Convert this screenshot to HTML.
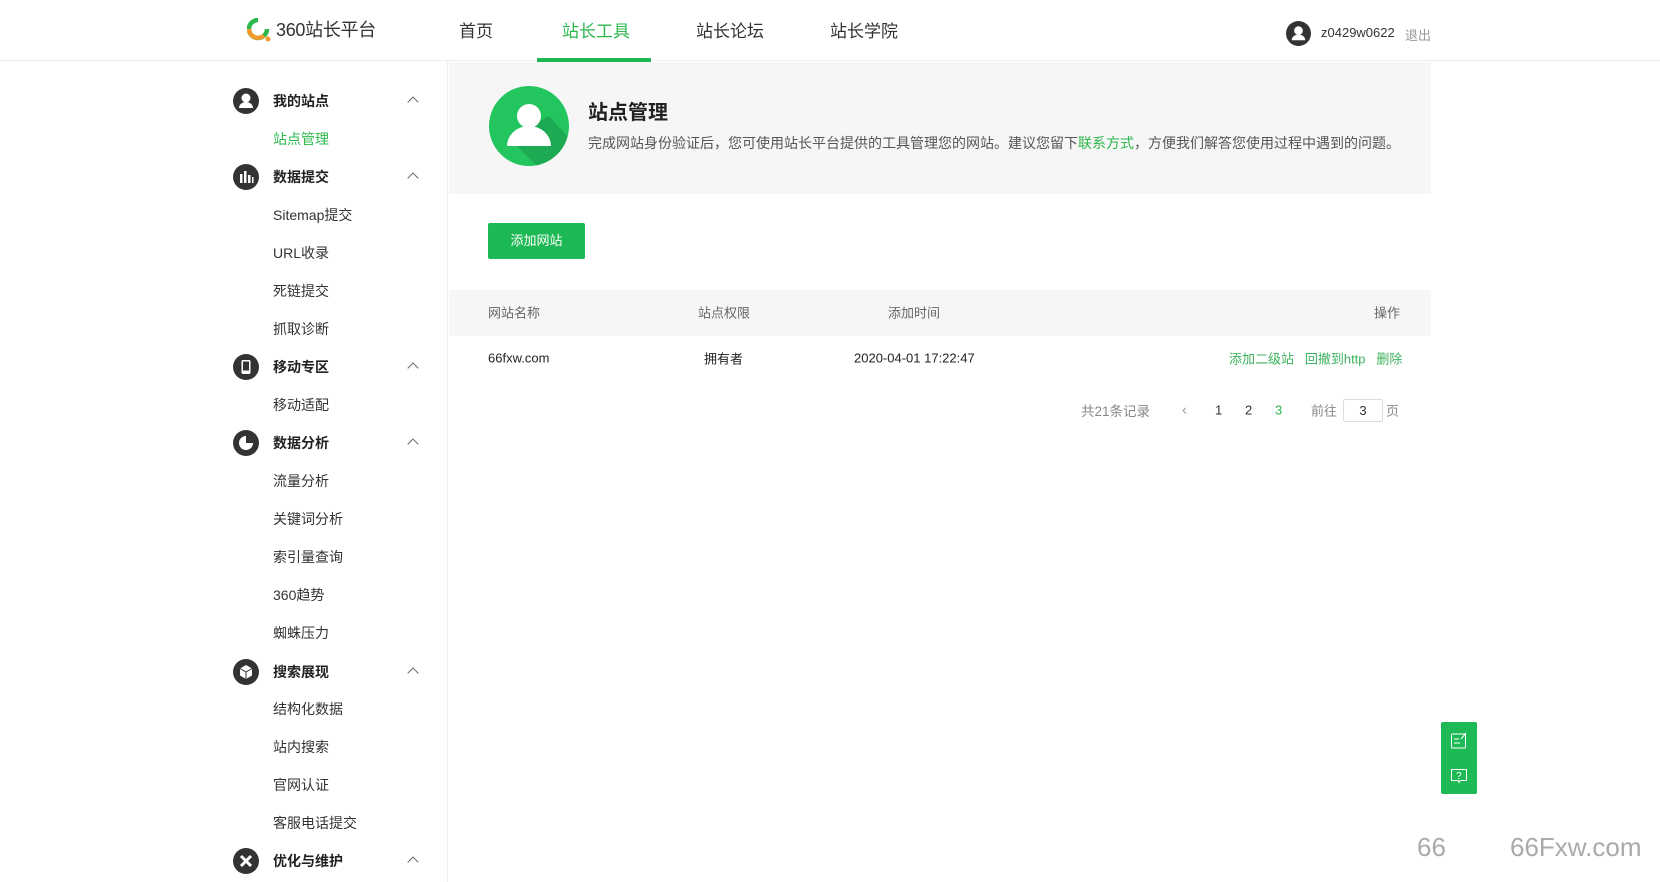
<!DOCTYPE html>
<html><head><meta charset="utf-8"><style>
*{margin:0;padding:0;box-sizing:border-box}
body{width:1660px;height:882px;overflow:hidden;background:#fff;font-family:"Liberation Sans","Noto Sans CJK SC",sans-serif;color:#333;position:relative}
.a{position:absolute;white-space:nowrap}
.hdr{position:absolute;left:0;top:0;width:1660px;height:61px;border-bottom:1px solid #eee;background:#fff}
.nav{font-size:17px;color:#333;top:17px}
.side{position:absolute;left:0;top:62px;width:448px;height:820px;border-right:1px solid #eee}
.it{position:absolute;left:273px;font-size:14px;color:#333;transform:translateY(-50%)}
.grp{font-weight:bold;color:#222}
.ic{position:absolute;left:233px;width:26px;height:26px;border-radius:50%;background:#333;transform:translateY(-50%)}
.chev{position:absolute;left:409px;width:8px;height:8px;border-left:1.3px solid #666;border-top:1.3px solid #666;transform:rotate(45deg)}
.c{transform:translateY(-50%);font-size:13px}
</style></head><body>
<div class="hdr">
  <svg class="a" style="left:247px;top:18px" width="26" height="26" viewBox="0 0 26 26"><path d="M11 2a9 9 0 1 0 9 9" stroke="#2db84d" stroke-width="4.5" fill="none"/><path d="M2 11a9 9 0 0 0 15 6.5" stroke="#f39a2b" stroke-width="4.5" fill="none"/><circle cx="21" cy="21" r="2.5" fill="#f39a2b"/></svg>
  <div class="a" style="left:276px;top:16px;font-size:18px;color:#333;letter-spacing:-0.3px">360站长平台</div>
  <div class="a nav" style="left:459px">首页</div>
  <div class="a nav" style="left:562px;color:#2db84d">站长工具</div>
  <div class="a" style="left:537px;top:58px;width:114px;height:4px;background:#1db954"></div>
  <div class="a nav" style="left:696px">站长论坛</div>
  <div class="a nav" style="left:830px">站长学院</div>
  <svg class="a" style="left:1286px;top:21px" width="25" height="25" viewBox="0 0 26 26"><circle cx="13" cy="13" r="13" fill="#333"/><circle cx="13" cy="10" r="4.5" fill="#fff"/><path d="M6 20a7 6 0 0 1 14 0z" fill="#fff"/></svg>
  <div class="a" style="left:1321px;top:25px;font-size:13px;color:#333">z0429w0622</div>
  <div class="a" style="left:1405px;top:25px;font-size:13px;color:#999">退出</div>
</div>
<div class="side"></div>
<div class="ic" style="top:101px"></div><svg class="a" style="left:233px;top:88px" width="26" height="26"><circle cx="13" cy="10" r="4.5" fill="#fff"/><path d="M6 20a7 6 0 0 1 14 0z" fill="#fff"/></svg>
<div class="it grp" style="top:101px">我的站点</div><div class="chev" style="top:98px"></div>
<div class="it" style="top:139px;color:#2db84d">站点管理</div>
<div class="ic" style="top:177px"></div><svg class="a" style="left:233px;top:164px" width="26" height="26"><rect x="7" y="10" width="2.5" height="9" fill="#fff"/><rect x="11" y="7" width="2.5" height="12" fill="#fff"/><rect x="15" y="11" width="2.5" height="8" fill="#fff"/><rect x="19" y="13" width="1.5" height="6" fill="#fff"/></svg>
<div class="it grp" style="top:177px">数据提交</div><div class="chev" style="top:174px"></div>
<div class="it" style="top:215px">Sitemap提交</div>
<div class="it" style="top:253px">URL收录</div>
<div class="it" style="top:291px">死链提交</div>
<div class="it" style="top:329px">抓取诊断</div>
<div class="ic" style="top:367px"></div><svg class="a" style="left:233px;top:354px" width="26" height="26"><rect x="8.5" y="6" width="9" height="14" rx="1.5" fill="#fff"/><rect x="10" y="7.5" width="6" height="9" fill="#333"/></svg>
<div class="it grp" style="top:367px">移动专区</div><div class="chev" style="top:364px"></div>
<div class="it" style="top:405px">移动适配</div>
<div class="ic" style="top:443px"></div><svg class="a" style="left:233px;top:430px" width="26" height="26"><circle cx="13" cy="13" r="7" fill="#fff"/><path d="M13 13V5a8 8 0 0 1 8 8z" fill="#333"/></svg>
<div class="it grp" style="top:443px">数据分析</div><div class="chev" style="top:440px"></div>
<div class="it" style="top:481px">流量分析</div>
<div class="it" style="top:519px">关键词分析</div>
<div class="it" style="top:557px">索引量查询</div>
<div class="it" style="top:595px">360趋势</div>
<div class="it" style="top:633px">蜘蛛压力</div>
<div class="ic" style="top:672px"></div><svg class="a" style="left:233px;top:659px" width="26" height="26"><path d="M13 6l6 3.5v7L13 20l-6-3.5v-7z" fill="#fff"/><path d="M7 9.5l6 3.5 6-3.5M13 13v7" stroke="#333" stroke-width="1" fill="none"/></svg>
<div class="it grp" style="top:672px">搜索展现</div><div class="chev" style="top:669px"></div>
<div class="it" style="top:709px">结构化数据</div>
<div class="it" style="top:747px">站内搜索</div>
<div class="it" style="top:785px">官网认证</div>
<div class="it" style="top:823px">客服电话提交</div>
<div class="ic" style="top:861px"></div><svg class="a" style="left:233px;top:848px" width="26" height="26"><path d="M8 8l10 10M18 8L8 18" stroke="#fff" stroke-width="3"/></svg>
<div class="it grp" style="top:861px">优化与维护</div><div class="chev" style="top:858px"></div>
<div class="a" style="left:449px;top:62px;width:982px;height:132px;background:#f6f6f6"></div>
<svg class="a" style="left:489px;top:86px" width="80" height="80" viewBox="0 0 80 80"><defs><clipPath id="cp"><circle cx="40" cy="40" r="40"/></clipPath></defs><circle cx="40" cy="40" r="40" fill="#22c55e"/><path d="M20 52L48 80H80V52L60 30z" fill="#1eaa52" clip-path="url(#cp)"/><circle cx="40" cy="30" r="12" fill="#fff"/><path d="M18 60a22 20 0 0 1 44 0z" fill="#fff"/></svg>
<div class="a" style="left:588px;top:96px;font-size:20px;font-weight:bold;color:#222">站点管理</div>
<div class="a" style="left:588px;top:133px;font-size:14px;color:#555">完成网站身份验证后，您可使用站长平台提供的工具管理您的网站。建议您留下<span style="color:#2db84d">联系方式</span>，方便我们解答您使用过程中遇到的问题。</div>
<div class="a" style="left:488px;top:223px;width:97px;height:36px;background:#1db954;border-radius:2px;color:#fff;font-size:13px;line-height:36px;text-align:center">添加网站</div>
<div class="a" style="left:449px;top:290px;width:982px;height:46px;background:#f6f6f6"></div>
<div class="a c" style="left:488px;top:312px;color:#666">网站名称</div>
<div class="a c" style="left:698px;top:312px;color:#666">站点权限</div>
<div class="a c" style="left:888px;top:312px;color:#666">添加时间</div>
<div class="a c" style="left:1374px;top:312px;color:#666">操作</div>
<div class="a c" style="left:488px;top:358px;color:#222">66fxw.com</div>
<div class="a c" style="left:704px;top:358px;color:#222">拥有者</div>
<div class="a c" style="left:854px;top:358px;color:#222">2020-04-01 17:22:47</div>
<div class="a c" style="left:1229px;top:358px;color:#3cb15c">添加二级站&nbsp;&nbsp;&nbsp;回撤到http&nbsp;&nbsp;&nbsp;删除</div>
<div class="a c" style="left:1081px;top:410px;color:#888;font-size:13.5px">共21条记录</div>
<div class="a c" style="left:1182px;top:410px;color:#999;font-size:15px">&lsaquo;</div>
<div class="a c" style="left:1215px;top:410px;color:#333">1</div>
<div class="a c" style="left:1245px;top:410px;color:#333">2</div>
<div class="a c" style="left:1275px;top:410px;color:#2db84d">3</div>
<div class="a c" style="left:1311px;top:410px;color:#888">前往</div>
<div class="a" style="left:1343px;top:399px;width:40px;height:23px;border:1px solid #ddd;border-radius:2px;font-size:13px;text-align:center;line-height:21px;color:#333">3</div>
<div class="a c" style="left:1386px;top:410px;color:#888">页</div>
<div class="a" style="left:1441px;top:722px;width:36px;height:72px;background:#1db954;border-radius:2px"></div>
<svg class="a" style="left:1449px;top:730px" width="20" height="20"><rect x="2.5" y="4" width="14" height="14" rx="1" stroke="#fff" fill="none"/><path d="M5 9h5M5 13h6M12 9l5-6" stroke="#fff"/></svg>
<svg class="a" style="left:1449px;top:766px" width="20" height="20"><path d="M2.5 3.5h15v11H11l-1 2-1-2H2.5z" stroke="#fff" fill="none"/><text x="7" y="13" font-size="10" fill="#fff" font-family="Liberation Sans">?</text></svg>
<div class="a" style="left:1417px;top:832px;font-size:26px;color:#aaa">66</div>
<div class="a" style="left:1510px;top:832px;font-size:26px;color:#aaa">66Fxw.com</div>
</body></html>
